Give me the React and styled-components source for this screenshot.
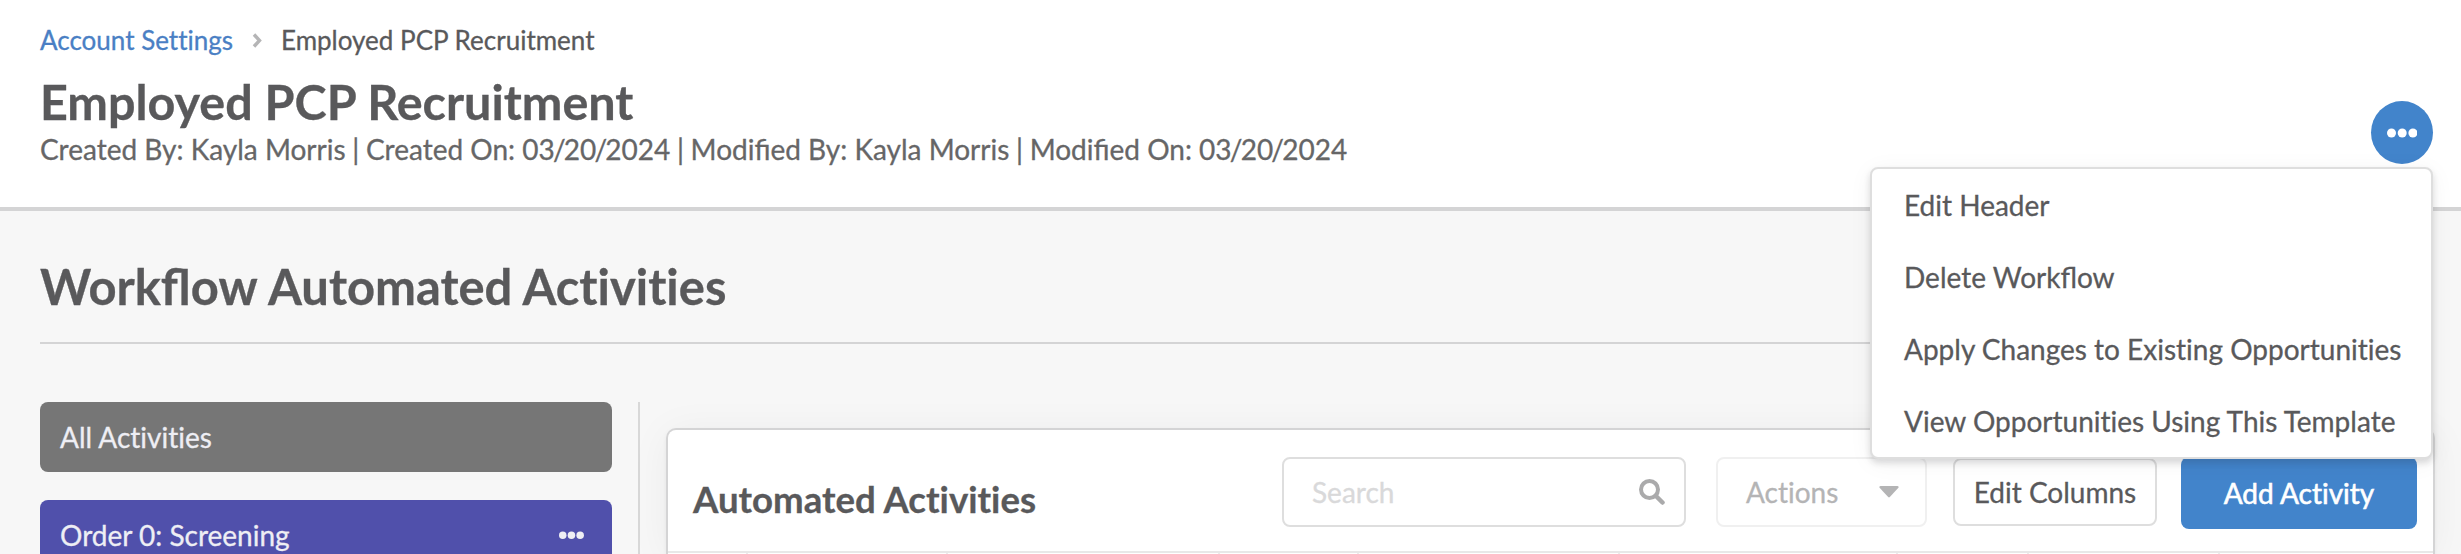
import React from "react";
import styled, { createGlobalStyle } from "styled-components";

const GlobalStyle = createGlobalStyle`
  * {
    box-sizing: border-box;
  }

  body {
    margin: 0;
    height: 554px;
    overflow: hidden;
    background: #f7f7f7;
    color: #59595b;
    font-family: Lato, "Helvetica Neue", Arial, sans-serif;
    font-size: 28px;
    line-height: 36px;
    font-variant-ligatures: none;
    -webkit-text-stroke: 0.3px;
  }
`;

const Header = styled.header`
  display: flex;
  justify-content: space-between;
  height: 211px;
  padding: 21px 28px 0 40px;
  background: #fff;
  border-bottom: 4px solid #d4d4d5;
`;

const Breadcrumb = styled.nav`
  display: flex;
  align-items: center;
  height: 38px;
  font-size: 26px;
`;

const Crumb = styled.span`
  color: ${({ $link }) => ($link ? "#4a7fc4" : "#59595b")};
`;

const CrumbDivider = styled.svg`
  width: 10px;
  height: 15px;
  margin: 1px 19px 0 19px;
`;

const PageTitle = styled.h1`
  margin: 13px 0 1px;
  font-size: 48.5px;
  line-height: 58px;
  font-weight: 700;
`;

const Meta = styled.div`
  color: #666667;
`;

const Ligated = styled.span`
  font-variant-ligatures: common-ligatures;
`;

const Slash = styled.span`
  margin: 0 -1.8px;
`;

const Separator = styled.span`
  margin: 0 -0.5px;
`;

const MenuAnchor = styled.div`
  position: relative;
  width: 62px;
  height: 62px;
  margin-top: 80px;
`;

const RoundButton = styled.button`
  display: flex;
  align-items: center;
  justify-content: center;
  width: 62px;
  height: 63px;
  padding: 0;
  border: 0;
  border-radius: 50%;
  background: #4284cb;
`;

const Menu = styled.ul`
  position: absolute;
  z-index: 10;
  top: 66px;
  right: 0;
  width: 563px;
  height: 292px;
  margin: 0;
  padding: 0;
  list-style: none;
  background: #fff;
  border: 2px solid #dedede;
  border-radius: 8px;
  box-shadow:
    0 4px 6px 0 rgba(34, 36, 38, 0.15),
    0 4px 24px 0 rgba(34, 36, 38, 0.05);
`;

const MenuItem = styled.li`
  height: 72px;
  padding: 18px 0 0 32px;
  white-space: nowrap;
`;

const Section = styled.main`
  padding: 46px 26px 0 40px;
`;

const SectionTitle = styled.h2`
  height: 87px;
  margin: 0 14px 0 0;
  border-bottom: 2px solid #d4d4d5;
  font-size: 48.9px;
  line-height: 58px;
  font-weight: 700;
`;

const Columns = styled.div`
  display: flex;
  margin-top: 58px;
  height: 152px;
`;

const Sidebar = styled.aside`
  display: flex;
  flex: none;
  flex-direction: column;
  gap: 28px;
  width: 600px;
  padding-right: 26px;
  border-right: 2px solid #d8d8d8;
`;

const Stage = styled.div`
  display: flex;
  flex: none;
  align-items: center;
  justify-content: space-between;
  height: 70px;
  padding: 0 28px 0 20px;
  border-radius: 8px;
  background: ${({ color }) => color};
  color: #eeeef4;
`;

const Card = styled.section`
  flex: 1;
  margin: 26px 0 0 26px;
  background: #fff;
  border: 2px solid #d4d4d5;
  border-radius: 10px 10px 0 0;
  border-bottom: 0;
  box-shadow:
    0 2px 4px rgba(34, 36, 38, 0.05),
    0 4px 40px rgba(34, 36, 38, 0.05);
`;

const Toolbar = styled.div`
  display: flex;
  height: 121px;
  padding: 27px 16px 0 25px;
`;

const CardTitle = styled.h3`
  flex: 1;
  margin: 20px 0 0;
  font-size: 36.6px;
  line-height: 44px;
  font-weight: 700;
`;

const Field = styled.div`
  display: flex;
  align-items: center;
  justify-content: space-between;
  width: ${({ width }) => width}px;
  height: 70px;
  margin-right: ${({ $gap }) => $gap}px;
  padding: 0 ${({ $end }) => $end}px 0 28px;
  border: 2px solid ${({ $faded }) => ($faded ? "#f0f0f0" : "#dedede")};
  border-radius: 8px;
  color: ${({ $faded }) => ($faded ? "#b4b4b5" : "#d9d9da")};
`;

const OutlineButton = styled.button`
  width: 204px;
  height: 68px;
  margin: 1px 24px 0 0;
  padding: 0;
  background: #fff;
  border: 2px solid #dedede;
  border-radius: 8px;
  color: #59595b;
  font: inherit;
`;

const PrimaryButton = styled.button`
  width: 236px;
  height: 72px;
  padding: 0;
  background: #4284cb;
  border: 0;
  border-radius: 8px;
  color: #fff;
  font: inherit;
  -webkit-text-stroke: 0.6px;
`;

const TableHead = styled.div`
  display: flex;
  border-top: 2px solid #e8e8e8;
`;

const HeadCell = styled.div`
  flex: none;
  width: ${({ width }) => width}px;
  height: 20px;
  border-right: 2px solid #ececec;
`;

const Dots = ({ size, pitch, color }) => (
  <svg width={pitch * 2 + size} height={size + 1}>
    {[0, 1, 2].map((i) => (
      <circle
        key={i}
        cx={size / 2 + pitch * i}
        cy={(size + 1) / 2}
        r={size / 2}
        fill={color}
      />
    ))}
  </svg>
);

const ShortDate = ({ month, day, year }) => (
  <>
    {month}
    <Slash>/</Slash>
    {day}
    <Slash>/</Slash>
    {year}
  </>
);

const created = { month: "03", day: "20", year: "2024" };

const menuItems = [
  "Edit Header",
  <Ligated>Delete Workflow</Ligated>,
  "Apply Changes to Existing Opportunities",
  "View Opportunities Using This Template",
];

const columnWidths = [80, 200, 272, 139, 261, 278, 131, 191];

export default function App() {
  return (
    <>
      <GlobalStyle />
      <Header>
        <div>
          <Breadcrumb>
            <Crumb $link>Account Settings</Crumb>
            <CrumbDivider viewBox="0 0 10 15">
              <path
                d="M2 1.5 7.5 7.5 2 13.5"
                fill="none"
                stroke="#b5b5b6"
                strokeWidth="3.4"
              />
            </CrumbDivider>
            <Crumb>Employed PCP Recruitment</Crumb>
          </Breadcrumb>
          <PageTitle>Employed PCP Recruitment</PageTitle>
          <Meta>
            <Ligated>
              Created By: Kayla Morris <Separator>|</Separator> Created On:{" "}
              <ShortDate {...created} /> <Separator>|</Separator> Modified By:
              Kayla Morris <Separator>|</Separator> Modified On:{" "}
              <ShortDate {...created} />
            </Ligated>
          </Meta>
        </div>
        <MenuAnchor>
          <RoundButton>
            <Dots size={9} pitch={10.7} color="#fff" />
          </RoundButton>
          <Menu>
            {menuItems.map((item, i) => (
              <MenuItem key={i}>{item}</MenuItem>
            ))}
          </Menu>
        </MenuAnchor>
      </Header>
      <Section>
        <SectionTitle>
          <Ligated>Workflow</Ligated> Automated Activities
        </SectionTitle>
        <Columns>
          <Sidebar>
            <Stage color="#767676">All Activities</Stage>
            <Stage color="#5050ab">
              Order 0: Screening
              <Dots size={7.5} pitch={8.7} color="#eeeef4" />
            </Stage>
          </Sidebar>
          <Card>
            <Toolbar>
              <CardTitle>Automated Activities</CardTitle>
              <Field width={404} $gap={30} $end={19}>
                Search
                <svg width="26" height="26" viewBox="0 0 26 26">
                  <circle
                    cx="10.5"
                    cy="10.5"
                    r="8.5"
                    fill="none"
                    stroke="#aaaaab"
                    strokeWidth="4"
                  />
                  <path
                    d="m17 17 6.5 6.5"
                    stroke="#aaaaab"
                    strokeWidth="4.5"
                    strokeLinecap="round"
                  />
                </svg>
              </Field>
              <Field width={211} $gap={26} $end={26} $faded>
                Actions
                <svg width="20" height="12" viewBox="0 0 20 12">
                  <path
                    d="M1.5 0h17q2 .5 .7 2l-8.4 9q-.8.8-1.600 0L.8 2q-1.3-1.5.7-2z"
                    fill="#b4b4b5"
                  />
                </svg>
              </Field>
              <OutlineButton>Edit Columns</OutlineButton>
              <PrimaryButton>Add Activity</PrimaryButton>
            </Toolbar>
            <TableHead>
              {columnWidths.map((width, i) => (
                <HeadCell key={i} width={width} />
              ))}
            </TableHead>
          </Card>
        </Columns>
      </Section>
    </>
  );
}
